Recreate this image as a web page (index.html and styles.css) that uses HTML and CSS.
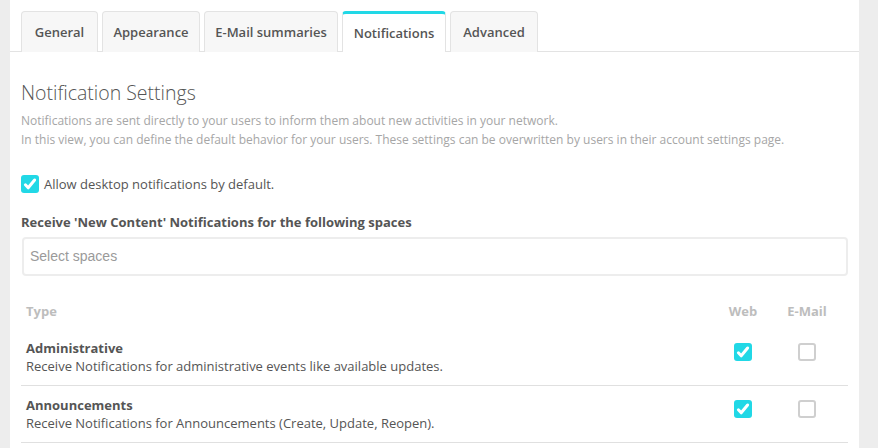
FILE: index.html
```html
<!DOCTYPE html>
<html>
<head>
<meta charset="utf-8">
<link rel="stylesheet" href="styles.css">
</head>
<body>
<div class="page">
  <div class="panel">
    <ul class="tabs">
      <li class="tab">General</li>
      <li class="tab">Appearance</li>
      <li class="tab">E-Mail summaries</li>
      <li class="tab active">Notifications</li>
      <li class="tab">Advanced</li>
    </ul>
    <div class="body">
      <h1 class="title">Notification Settings</h1>
      <p class="desc">Notifications are sent directly to your users to inform them about new activities in your network.<br>In this view, you can define the default behavior for your users. These settings can be overwritten by users in their account settings page.</p>

      <label class="check-row">
        <span class="cb on"><svg viewBox="0 0 18 18" width="18" height="18"><path d="M4.4 9.8 L7.2 12.8 L13.6 5" fill="none" stroke="#fff" stroke-width="3" stroke-linecap="round" stroke-linejoin="round"/></svg></span>
        <span>Allow desktop notifications by default.</span>
      </label>

      <div class="field-label">Receive 'New Content' Notifications for the following spaces</div>
      <div class="select">Select spaces</div>

      <div class="table">
        <div class="row head">
          <div class="c-type">Type</div>
          <div class="c-chk">Web</div>
          <div class="c-chk">E-Mail</div>
        </div>
        <div class="row item">
          <div class="c-type">
            <div class="name">Administrative</div>
            <div class="info">Receive Notifications for administrative events like available updates.</div>
          </div>
          <div class="c-chk"><span class="cb on"><svg viewBox="0 0 18 18" width="18" height="18"><path d="M4.4 9.8 L7.2 12.8 L13.6 5" fill="none" stroke="#fff" stroke-width="3" stroke-linecap="round" stroke-linejoin="round"/></svg></span></div>
          <div class="c-chk"><span class="cb"></span></div>
        </div>
        <div class="row item">
          <div class="c-type">
            <div class="name">Announcements</div>
            <div class="info">Receive Notifications for Announcements (Create, Update, Reopen).</div>
          </div>
          <div class="c-chk"><span class="cb on"><svg viewBox="0 0 18 18" width="18" height="18"><path d="M4.4 9.8 L7.2 12.8 L13.6 5" fill="none" stroke="#fff" stroke-width="3" stroke-linecap="round" stroke-linejoin="round"/></svg></span></div>
          <div class="c-chk"><span class="cb"></span></div>
        </div>
      </div>
    </div>
  </div>
</div>
</body>
</html>
```

FILE: styles.css
```css
* { box-sizing: border-box; }
html, body { margin: 0; padding: 0; }
body {
  background: #ededed;
  font-family: "Open Sans", "Liberation Sans", sans-serif;
  color: #555;
  width: 878px;
  height: 448px;
  overflow: hidden;
}
.page {
  padding: 0 19px 0 10px;
}
.panel {
  background: #fff;
  height: 448px;
  padding-top: 11px;
}
.tabs {
  list-style: none;
  margin: 0;
  padding: 0 0 0 11px;
  display: flex;
  gap: 4px;
  border-bottom: 1px solid #e3e3e3;
  height: 41px;
}
.tab {
  height: 41px;
  padding: 0;
  white-space: nowrap;
  display: flex;
  align-items: center;
  justify-content: center;
  font-size: 13px;
  font-weight: 600;
  color: #555;
  background: #f7f7f7;
  border: 1px solid #e3e3e3;
  border-bottom: none;
  border-radius: 4px 4px 0 0;
}
.tab:nth-child(1) { width: 77px; }
.tab:nth-child(2) { width: 98px; }
.tab:nth-child(3) { width: 134px; }
.tab:nth-child(4) { width: 104px; }
.tab:nth-child(5) { width: 88px; }
.tab.active {
  background: #fff;
  border-top: 3px solid #21d8e6;
  height: 41px;
  position: relative;
  z-index: 1;
}
.body {
  padding: 0 11px;
}
.title {
  margin: 29px 0 0;
  font-size: 19.5px;
  line-height: 24px;
  font-weight: 300;
  color: #555;
}
.desc {
  margin: 6px 0 0;
  font-size: 12px;
  line-height: 19px;
  color: #a6a6a6;
}
.check-row {
  display: flex;
  align-items: center;
  gap: 5px;
  margin-top: 26px;
  font-size: 13px;
  line-height: 18px;
  color: #555;
}
.cb {
  width: 18px;
  height: 18px;
  border-radius: 3px;
  border: 2px solid #cfcfcf;
  background: #fff;
  display: inline-block;
  flex: none;
}
.cb.on {
  background: #21d8e6;
  border: none;
}
.cb svg { display: block; }
.field-label {
  margin-top: 20px;
  font-size: 13px;
  font-weight: 700;
  line-height: 18px;
  color: #555;
}
.select {
  margin-top: 6px;
  margin-left: 1px;
  height: 39px;
  border: 2px solid #ededed;
  border-radius: 4px;
  padding: 0 6px;
  display: flex;
  align-items: center;
  padding-bottom: 2px;
  font-family: "Liberation Sans", Arial, sans-serif;
  font-size: 14px;
  color: #9a9a9a;
}
.table {
  margin-top: 17px;
}
.row {
  display: grid;
  grid-template-columns: 1fr 64px 64px;
  padding-right: 9px;
}
.row.head {
  padding-top: 9px;
  padding-bottom: 9px;
  font-size: 13px;
  font-weight: 700;
  line-height: 18px;
  color: #bdbdbd;
}
.row.head .c-type { padding-left: 5px; }
.row.item {
  padding-top: 10px;
  padding-bottom: 10px;
  border-bottom: 1px solid #e0e0e0;
  font-size: 13px;
  line-height: 18px;
}
.c-chk {
  display: flex;
  justify-content: center;
  align-items: center;
}
.row.item .c-chk {
  align-items: flex-start;
  padding-top: 4px;
}
.name { font-weight: 700; color: #555; padding-left: 5px; }
.info { color: #555; padding-left: 5px; }
```
